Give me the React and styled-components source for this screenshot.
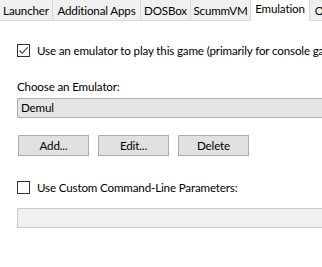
import styled, { createGlobalStyle } from "styled-components";

const GlobalStyle = createGlobalStyle`
  html, body {
    margin: 0;
    padding: 0;
    background: #ffffff;
  }
  body {
    font-family: "Segoe UI", Lato, "Noto Sans", sans-serif;
    font-size: 11.6px;
    letter-spacing: -0.15px;
    color: #000;
  }
`;

const Page = styled.div`
  width: 322px;
  height: 267px;
  overflow: hidden;
  background: #fff;
`;

const TabBar = styled.div`
  display: flex;
  height: 21px;
  box-sizing: border-box;
  border-bottom: 1px solid #d9d9d9;
`;

const Tab = styled.div`
  flex: none;
  box-sizing: border-box;
  width: ${(p) => p.w}px;
  height: ${(p) => (p.active ? 21 : 20)}px;
  padding-top: ${(p) => (p.active ? 1 : 3)}px;
  background: ${(p) => (p.active ? "#ffffff" : "#f0f0f0")};
  border-right: 1px solid #d9d9d9;
  text-align: center;
  white-space: nowrap;
  overflow: hidden;
  line-height: 15px;
`;

const Content = styled.div`
  padding: 23px 0 0 17px;
`;

const CheckRow = styled.label`
  display: flex;
  align-items: center;
  gap: 7px;
  height: 13px;
  margin-top: ${(p) => p.top || 0}px;
  white-space: nowrap;
`;

const Box = styled.span`
  flex: none;
  width: 13px;
  height: 13px;
  box-sizing: border-box;
  border: 1px solid #333;
  background: #fff;
  display: flex;
  align-items: center;
  justify-content: center;
`;

const FieldLabel = styled.div`
  margin-top: 23px;
  height: 14px;
  line-height: 14px;
`;

const Select = styled.div`
  margin-top: 4px;
  width: 330px;
  height: 20px;
  box-sizing: border-box;
  border: 1px solid #adadad;
  background: #e5e5e5;
  padding-left: 3px;
  line-height: 18px;
`;

const ButtonRow = styled.div`
  display: flex;
  gap: 9px;
  margin: 17px 0 0 1px;
`;

const Button = styled.div`
  width: 71px;
  height: 21px;
  box-sizing: border-box;
  border: 1px solid #adadad;
  background: #e1e1e1;
  display: flex;
  align-items: center;
  justify-content: center;
`;

const TextInput = styled.div`
  margin-top: 14px;
  width: 330px;
  height: 20px;
  box-sizing: border-box;
  border: 1px solid #cccccc;
  background: #f0f0f0;
`;

const tabs = [
  { label: "Launcher", w: 53 },
  { label: "Additional Apps", w: 88 },
  { label: "DOSBox", w: 50 },
  { label: "ScummVM", w: 60 },
  { label: "Emulation", w: 59, active: true },
  { label: "Other", w: 40 },
];

const Check = ({ checked }) => (
  <Box>
    {checked && (
      <svg width="11" height="11" viewBox="0 0 11 11">
        <path d="M1.5 5.5 L4.2 8.3 L9.6 2.4" fill="none" stroke="#333" strokeWidth="1.1" />
      </svg>
    )}
  </Box>
);

export default function App() {
  return (
    <Page>
      <GlobalStyle />
      <TabBar>
        {tabs.map((t) => (
          <Tab key={t.label} w={t.w} active={t.active}>
            {t.label}
          </Tab>
        ))}
      </TabBar>
      <Content>
        <CheckRow>
          <Check checked />
          Use an emulator to play this game (primarily for console games)
        </CheckRow>
        <FieldLabel>Choose an Emulator:</FieldLabel>
        <Select>Demul</Select>
        <ButtonRow>
          <Button>Add...</Button>
          <Button>Edit...</Button>
          <Button>Delete</Button>
        </ButtonRow>
        <CheckRow top={25}>
          <Check />
          Use Custom Command-Line Parameters:
        </CheckRow>
        <TextInput />
      </Content>
    </Page>
  );
}
